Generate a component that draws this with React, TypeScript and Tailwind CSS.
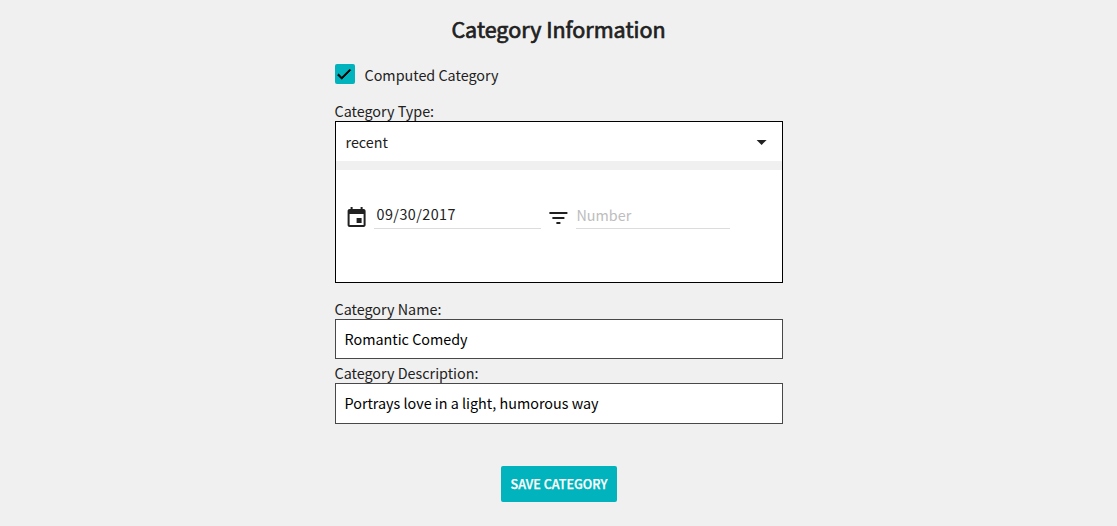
import React, { useState } from "react";

function CheckIcon() {
  return (
    <svg viewBox="0 0 24 24" className="mt-px block size-[18px] fill-black stroke-black stroke-1">
      <path d="M9 16.17L4.83 12l-1.42 1.41L9 19 21 7l-1.41-1.41z" />
    </svg>
  );
}

function CalendarIcon() {
  return (
    <svg viewBox="-0.6 0 24 24" className="block size-6 shrink-0 fill-[#212121]">
      <path d="M17 12h-5v5h5v-5zM16 1v2H8V1H6v2H5c-1.11 0-1.99.9-1.99 2L3 19c0 1.1.89 2 2 2h14c1.1 0 2-.9 2-2V5c0-1.1-.9-2-2-2h-1V1h-2zm3 18H5V8h14v11z" />
    </svg>
  );
}

function FilterIcon() {
  return (
    <svg viewBox="-0.4 0 24 24" className="block size-6 shrink-0 fill-[#212121]">
      <path d="M10 18h4v-2h-4v2zM3 6v2h18V6H3zm3 7h12v-2H6v2z" />
    </svg>
  );
}

function TextField({ label, initial, className }: { label: string; initial: string; className: string }) {
  const [value, setValue] = useState(initial);
  return (
    <label className="block">
      <span className="block h-5 leading-5">{label}</span>
      <input
        value={value}
        onChange={(e) => setValue(e.target.value)}
        className={`block w-full border border-[#484848] bg-white px-[9px] pb-[2px] text-black outline-none ${className}`}
      />
    </label>
  );
}

export default function App() {
  const [computed, setComputed] = useState(true);
  const [date, setDate] = useState("09/30/2017");
  const [count, setCount] = useState("");

  return (
    <main className="h-[526px] overflow-hidden bg-[#f0f0f0] font-['Noto_Sans_CJK_SC',sans-serif] text-[14.35px] text-[#212121]">
      <form className="mx-auto flex w-[448px] flex-col" onSubmit={(e) => e.preventDefault()}>
        <h2 className="mt-[11px] h-9 text-center text-[21.5px] leading-9 [-webkit-text-stroke:0.7px_#212121]">
          Category Information
        </h2>

        <button
          type="button"
          role="checkbox"
          aria-checked={computed}
          onClick={() => setComputed(!computed)}
          className="mt-[17px] flex h-5 items-center"
        >
          <span className="block size-5 rounded-[2px] bg-[#00b3bc]">{computed && <CheckIcon />}</span>
          <span className="pt-px pl-[10px] leading-5">Computed Category</span>
        </button>

        <span className="mt-[17px] h-5 leading-5">Category Type:</span>
        <section className="flex h-[162px] flex-col border border-black bg-white">
          <div className="flex h-[39px] items-center justify-between pr-[9px] pl-[10px]">
            <span className="pt-px leading-5">recent</span>
            <svg viewBox="-0.6 0 24 24" className="block size-6 fill-[#212121]">
              <path d="M7 10l5 5 5-5z" />
            </svg>
          </div>
          <div className="h-[9px] bg-[#f0f0f0]" />
          <div className="flex pt-9 pl-2">
            <CalendarIcon />
            <input
              value={date}
              onChange={(e) => setDate(e.target.value)}
              className="ml-[6px] h-[23px] w-[167px] border-b border-[#dcdcdc] pb-[7px] pl-[3px] tracking-[0.45px] outline-none"
            />
            <span className="ml-[5px]">
              <FilterIcon />
            </span>
            <input
              value={count}
              placeholder="Number"
              onChange={(e) => setCount(e.target.value)}
              className="ml-[6px] h-[23px] w-[154px] border-b border-[#dcdcdc] pb-[5px] pl-px outline-none placeholder:text-[#bdbdbd]"
            />
          </div>
        </section>

        <div className="mt-4 flex flex-col gap-1">
          <TextField label="Category Name:" initial="Romantic Comedy" className="h-10" />
          <TextField label="Category Description:" initial="Portrays love in a light, humorous way" className="h-[41px]" />
        </div>

        <button
          type="submit"
          className="mt-[42px] h-9 w-[116px] self-center rounded-[2px] bg-[#00b3bc] pl-px text-[12.6px] font-medium whitespace-nowrap text-white [-webkit-text-stroke:0.25px_white]"
        >
          SAVE CATEGORY
        </button>
      </form>
    </main>
  );
}
